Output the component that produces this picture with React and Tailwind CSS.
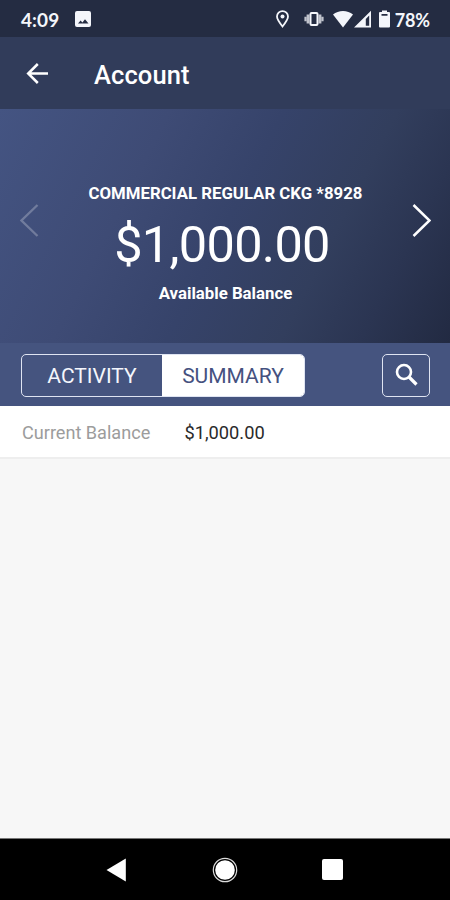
function StatusBar() {
  return (
    <div className="flex h-[37px] shrink-0 items-center bg-[#242c42] pr-[20px] pl-[21px] text-[#f4f6fb]">
      <span className="w-[54px] pt-[2px] font-['Lato',sans-serif] text-[19px] leading-none font-bold tracking-[0.1px]">4:09</span>
      <svg className="h-[16px] w-[16px]" viewBox="0 0 16 16" fill="currentColor">
        <path fillRule="evenodd" d="M2 0h12a2 2 0 0 1 2 2v12a2 2 0 0 1-2 2H2a2 2 0 0 1-2-2V2a2 2 0 0 1 2-2zm1 12.500h10.500L10 8.200l-2.600 3.200-1.800-2z" />
      </svg>

      <div className="ml-auto flex items-center">
        {/* location */}
        <svg className="mr-[15px] h-[18px] w-[13px]" viewBox="0 0 13 18" fill="none" stroke="currentColor" strokeWidth="1.800">
          <path d="M6.500 16.500C3.500 12.800 1 9.700 1 6.600a5.500 5.500 0 0 1 11 0c0 3.100-2.500 6.200-5.500 9.900z" />
          <circle cx="6.500" cy="6.500" r="2" fill="currentColor" stroke="none" />
        </svg>
        {/* vibrate */}
        <svg className="mr-[9px] h-[16px] w-[20px]" viewBox="0 0 20 16" fill="none" stroke="currentColor">
          <rect x="6.500" y="2" width="7" height="12" rx="1" strokeWidth="2" />
          <path d="M4 3.500v9M16 3.500v9" strokeWidth="2.800" opacity="0.750" />
          <path d="M1.500 5.800v4.400M18.500 5.800v4.400" strokeWidth="2.200" opacity="0.750" />
        </svg>
        {/* wifi */}
        <svg className="mr-[1px] h-[18px] w-[20px]" viewBox="0 0 20 18" fill="currentColor">
          <path d="M10 17.500 0 4.600C2.800 2.200 6.200 1 10 1s7.200 1.200 10 3.600z" />
        </svg>
        {/* signal */}
        <svg className="mr-[8px] h-[18px] w-[17px]" viewBox="0 0 17 18" fill="currentColor">
          <path fillRule="evenodd" d="M17 .800V17.500H0zM15.200 5.500l-3.400 3.600v6.700h3.400z" />
        </svg>
        {/* battery */}
        <svg className="mr-[5px] h-[18px] w-[11px]" viewBox="0 0 11 18" fill="currentColor">
          <path fillRule="evenodd" d="M3 .500h5V2h2a1 1 0 0 1 1 1v13.500a1 1 0 0 1-1 1H1a1 1 0 0 1-1-1V3a1 1 0 0 1 1-1h2zM2.500 4v1.700h6V4z" />
        </svg>
        <span className="pt-[2px] font-['Lato',sans-serif] text-[18px] leading-none font-bold tracking-[-0.100px]">78%</span>
      </div>
    </div>
  )
}

function AppBar() {
  return (
    <div className="flex h-[72px] shrink-0 items-center bg-[#313c5a] pl-[26px] text-white">
      <svg className="h-[22px] w-[22px]" viewBox="0 0 22 22" fill="none" stroke="currentColor" strokeWidth="2.500">
        <path d="M22 11.500H2M11.800 2 2.200 11.500 11.800 21" />
      </svg>
      <h1 className="ml-[46px] pt-[5px] text-[25.500px] leading-none font-medium tracking-[0.1px]">Account</h1>
    </div>
  )
}

function BalanceCard() {
  return (
    <div className="flex h-[234px] shrink-0 items-center justify-between bg-[linear-gradient(117deg,#445482_0%,#3e4b75_30%,#36436a_50%,#323e5d_70%,#2b3552_84%,#222a42_100%)] pr-[19px] pl-[20px] text-white">
      <svg className="mb-[12px] h-[33px] w-[19px] opacity-25" viewBox="0 0 19 33" fill="none" stroke="currentColor" strokeWidth="2.300">
        <path d="M17.500 1 1.500 16.500l16 15.500" />
      </svg>
      <div className="flex flex-col items-center pt-[34px] whitespace-nowrap">
        <p className="text-[16.800px] leading-[20px] font-bold">COMMERCIAL REGULAR CKG *8928</p>
        <p className="mt-[13px] mr-[7px] text-[50.500px] leading-[58px] tracking-[-0.700px]">$1,000.00</p>
        <p className="mt-[9px] text-[16.800px] leading-[20px] font-bold">Available Balance</p>
      </div>
      <svg className="mb-[12px] h-[33px] w-[19px]" viewBox="0 0 19 33" fill="none" stroke="currentColor" strokeWidth="2.500">
        <path d="m1.500 1 16 15.500-16 15.500" />
      </svg>
    </div>
  )
}

function TabBar() {
  return (
    <div className="flex h-[63px] shrink-0 items-center justify-between bg-[#45547f] pt-[2px] pr-[20px] pl-[21px]">
      <div className="flex h-[43px] w-[284px] overflow-hidden rounded-[5px] border-[1.500px] border-[#dfe4f2] text-[21px]">
        <button className="w-[140px] pt-[2px] text-[#f4f6fc]">ACTIVITY</button>
        <button className="flex-1 bg-white pt-[2px] text-[#45517f]">SUMMARY</button>
      </div>
      <button className="flex h-[43px] w-[48px] items-center justify-center rounded-[5px] border-[1.500px] border-[#dfe4f2] text-white">
        <svg className="mb-[3px] ml-[1px] h-[23px] w-[23px]" viewBox="0 0 23 23" fill="none" stroke="currentColor" strokeWidth="2.600">
          <circle cx="9" cy="9" r="7" />
          <path d="m14 14 7.500 7.500" strokeWidth="3.200" />
        </svg>
      </button>
    </div>
  )
}

function NavBar() {
  return (
    <div className="flex h-[62px] shrink-0 items-center justify-between border-t border-[#777] bg-black pr-[107px] pl-[106px] text-white">
      <svg className="h-[24px] w-[20px]" viewBox="0 0 20 24" fill="currentColor">
        <path d="M19.800 .500v23L.500 12z" />
      </svg>
      <svg className="ml-[2px] h-[26px] w-[26px]" viewBox="0 0 26 26" fill="currentColor">
        <circle cx="13" cy="13" r="9.800" />
        <circle cx="13" cy="13" r="11.700" fill="none" stroke="#ddd" strokeWidth="1.200" />
      </svg>
      <div className="h-[21px] w-[21px] rounded-[2px] bg-white" />
    </div>
  )
}

export default function App() {
  return (
    <div className="flex h-[900px] w-[450px] flex-col overflow-hidden bg-[#f7f7f7] font-['Roboto',sans-serif]">
      <StatusBar />
      <AppBar />
      <BalanceCard />
      <TabBar />
      <div className="flex h-[53px] shrink-0 items-center border-b-2 border-[#eeeeee] bg-white pt-[2px] pl-[22px] text-[18.250px]">
        <span className="w-[162.500px] text-[18.100px] text-[#9c9c9c]">Current Balance</span>
        <span className="text-[#2a2a2a]">$1,000.00</span>
      </div>
      <div className="flex-1" />
      <NavBar />
    </div>
  )
}
